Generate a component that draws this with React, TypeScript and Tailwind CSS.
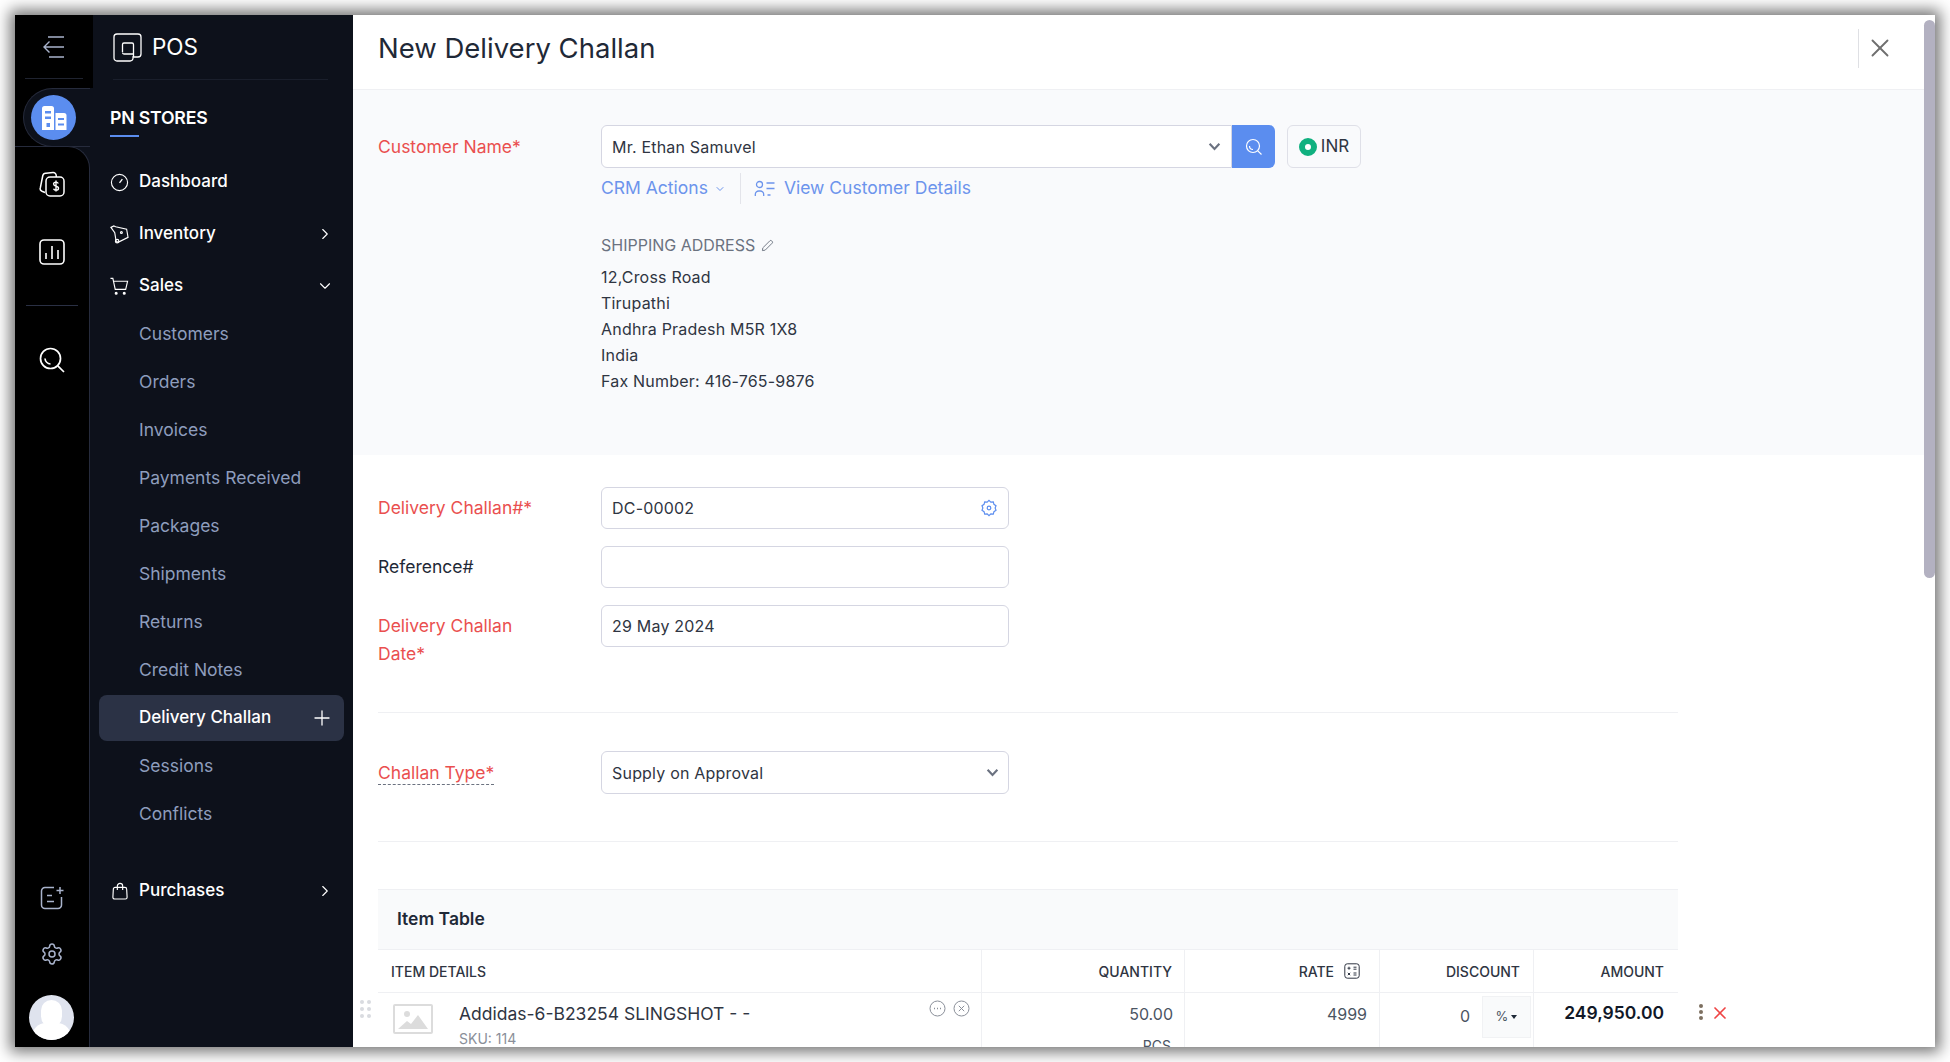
import { ChevronDown, ChevronRight, Plus, Settings, X } from "lucide-react";

const subItems = ["Customers", "Orders", "Invoices", "Payments Received", "Packages", "Shipments", "Returns", "Credit Notes"];
const addressLines = ["12,Cross Road", "Tirupathi", "Andhra Pradesh M5R 1X8", "India", "Fax Number: 416-765-9876"];

function SolidChevron({ className }: { className?: string }) {
  return (
    <svg viewBox="0 0 12 8" className={className} fill="none" stroke="currentColor" strokeWidth="2">
      <path d="M1.5 1.5 6 6.2l4.5-4.7" />
    </svg>
  );
}

function Rail() {
  return (
    <div className="w-[75px] shrink-0 flex flex-col bg-[#0d111b] text-white">
      <div className="relative z-10 w-[78px] h-[73px] bg-black px-[10px] shrink-0">
        <div className="h-[64px] border-b border-[#1f2330] flex items-center justify-center">
          <svg viewBox="0 0 24 24" className="w-[24px] h-[24px] text-[#a9b3cc]" fill="none" stroke="currentColor" strokeWidth="1.4">
            <path d="M6 2h16M2 12h20M7 22h15M7.5 6.5 2 12l5.5 5.5" />
          </svg>
        </div>
      </div>
      <div className="h-[59px] shrink-0 bg-black">
        <div className="h-full ml-[8px] pl-[7px] bg-[#0d111b] rounded-l-[30px] border-l border-t border-b border-[#262b3c] flex items-center">
          <div className="w-[45px] h-[45px] rounded-full bg-[#5b8def] flex items-center justify-center">
            <svg viewBox="0 0 26 26" className="w-[26px] h-[26px] text-white" fill="currentColor">
              <path d="M1 3.5A2.5 2.5 0 0 1 3.500 1h7A2.500 2.500 0 0 1 13 3.500V25H1z" />
              <path d="M14.500 8H23a2.500 2.500 0 0 1 2.500 2.500V25h-11z" />
              <path d="M4 6h6v2.500H4zM4 11.500h6V14H4zM5.500 18h3.500v4H5.500zM17 13h6v2H17zM17 18.500h6v2H17z" fill="#5b8def" />
            </svg>
          </div>
        </div>
      </div>
      <div className="flex-1 bg-black rounded-tr-[22px] border-t border-r border-[#262b3c] flex flex-col items-center pr-[1px] -mt-px">
        <svg viewBox="0 0 26 26" className="mt-[24px] w-[26px] h-[26px]" fill="none" stroke="currentColor" strokeWidth="1.500">
          <path d="M6 21.500 3 20.300A3 3 0 0 1 1.400 16.500L3.800 4.500A3 3 0 0 1 7 2.200L14 1.500a3 3 0 0 1 3.200 2.800L17.300 6" />
          <rect x="7" y="6" width="18" height="19" rx="4" fill="#000" />
          <path d="M19.300 12.500c-.5-1-1.300-1.400-2.300-1.400-1.400 0-2.400.8-2.400 2s1 1.800 2.400 2.100 2.500.9 2.500 2.100-1 2-2.500 2c-1.100 0-2-.5-2.500-1.500M17 9.500v11" strokeWidth="1.400" />
        </svg>
        <svg viewBox="0 0 26 26" className="mt-[42px] w-[26px] h-[26px]" fill="none" stroke="currentColor" strokeWidth="1.600">
          <rect x="1" y="1" width="24" height="24" rx="4" />
          <path d="M7 14v6M13 7v13M19 11v9" />
        </svg>
        <div className="mt-[40px] w-[52px] border-t border-[#2a3044]" />
        <svg viewBox="0 0 26 26" className="mt-[41px] w-[26px] h-[26px]" fill="none" stroke="currentColor" strokeWidth="1.700">
          <circle cx="11.500" cy="11.500" r="10" />
          <path d="M18.800 18.800 25 25M6 11.500a6 6 0 0 0 5.500 5.500" />
        </svg>
        <div className="mt-auto flex flex-col items-center text-[#a9b3cc]">
          <svg viewBox="0 0 24 24" className="w-[24px] h-[24px] ml-[1px]" fill="none" stroke="currentColor" strokeWidth="1.500">
            <path d="M14 1.500H5A3.500 3.500 0 0 0 1.500 5v14A3.500 3.500 0 0 0 5 22.500h13a3.500 3.500 0 0 0 3.500-3.500v-8" />
            <path d="M7 9.500h5M7 15.500h7M20 1v7M16.500 4.500h7" />
          </svg>
          <Settings className="mt-[32px] w-[24px] h-[24px]" strokeWidth={1.500} />
          <div className="mt-[29px] mb-[7px] w-[45px] h-[45px] rounded-full bg-[#dfe3ee] overflow-hidden relative">
            <div className="absolute left-[12px] top-[5px] w-[21px] h-[27px] rounded-full bg-white" />
            <div className="absolute left-[3px] top-[28px] w-[39px] h-[24px] rounded-t-[14px] bg-white" />
          </div>
        </div>
      </div>
    </div>
  );
}

function Sidebar() {
  return (
    <aside className="w-[263px] shrink-0 bg-[#0d111b] text-white">
      <div className="h-[65px] ml-[23px] mr-[25px] border-b border-[#1a1f2c] flex items-center gap-[10px]">
        <svg viewBox="0 0 29 29" className="w-[29px] h-[29px]" fill="none" stroke="currentColor" strokeWidth="1.300">
          <path d="M4 1h21a3 3 0 0 1 3 3v17a3 3 0 0 1-3 3h-5v1.500a3 3 0 0 1-3 2.500H4a3 3 0 0 1-3-3V4a3 3 0 0 1 3-3z" />
          <path d="M11 10h8a1.500 1.500 0 0 1 1.500 1.500V24M9.500 19v-7.500A1.500 1.500 0 0 1 11 10M9.500 19.500a1.500 1.500 0 0 0 1.500 1.500h9.500" />
        </svg>
        <span className="text-[22.5px] leading-none">POS</span>
      </div>
      <div className="pl-[20px] pt-[5px] h-[72px] flex items-center relative">
        <span className="text-[17.7px] font-semibold tracking-[-0.2px]">PN STORES</span>
        <div className="absolute left-[20px] top-[55px] w-[29px] h-[2px] bg-[#5b8def]" />
      </div>
      <nav className="flex flex-col mt-[6px]">
        <div className="h-[48px] pl-[20px] flex items-center text-[17px] font-medium">
          <svg viewBox="0 0 20 20" className="w-[19px] h-[19px] mr-[10px]" fill="none" stroke="currentColor" strokeWidth="1.200">
            <circle cx="10" cy="10" r="8.500" />
            <path d="M10 10.500 13 6.500" strokeWidth="1.400" />
          </svg>
          Dashboard
        </div>
        <div className="mt-[4px] h-[48px] pl-[20px] pr-[19px] flex items-center text-[17px] font-medium">
          <svg viewBox="0 0 20 20" className="w-[19px] h-[19px] mr-[10px]" fill="none" stroke="currentColor" strokeWidth="1.200">
            <path d="M1 2.500 4 1l2 .8L17.500 4.500 19 13l-10 5-2.500-.500L5 8z" />
            <circle cx="7.500" cy="17" r="1.800" />
            <circle cx="12" cy="8" r="1" />
          </svg>
          <span className="flex-1">Inventory</span>
          <ChevronRight className="w-[18px] h-[18px]" strokeWidth={1.500} />
        </div>
        <div className="mt-[4px] h-[48px] pl-[20px] pr-[19px] flex items-center text-[17px] font-medium">
          <svg viewBox="0 0 20 20" className="w-[19px] h-[19px] mr-[10px]" fill="none" stroke="currentColor" strokeWidth="1.200">
            <path d="M.5 1.500H3L5.500 13h11L18.500 4.500H3.600" />
            <circle cx="6.500" cy="17" r="1" fill="currentColor" />
            <circle cx="15" cy="17" r="1" fill="currentColor" />
          </svg>
          <span className="flex-1">Sales</span>
          <ChevronDown className="w-[18px] h-[18px]" strokeWidth={1.500} />
        </div>
        {subItems.map((item) => (
          <div key={item} className="h-[48px] pl-[49px] flex items-center text-[17.5px] text-[#8e9dbd]">
            {item}
          </div>
        ))}
        <div className="my-px h-[46px] mx-[9px] pl-[40px] pr-[10px] rounded-[8px] bg-[#2b3245] flex items-center text-[17px] font-medium">
          <span className="flex-1">Delivery Challan</span>
          <Plus className="w-[24px] h-[24px]" strokeWidth={1.300} />
        </div>
        <div className="h-[48px] pl-[49px] flex items-center text-[17.5px] text-[#8e9dbd]">Sessions</div>
        <div className="h-[48px] pl-[49px] flex items-center text-[17.5px] text-[#8e9dbd]">Conflicts</div>
        <div className="mt-[29px] h-[48px] pl-[22px] pr-[19px] flex items-center text-[17px] font-medium">
          <svg viewBox="0 0 18 20" className="w-[16px] h-[18px] mr-[11px]" fill="none" stroke="currentColor" strokeWidth="1.300">
            <path d="M3.500 6h11a2 2 0 0 1 2 2l.5 9a2 2 0 0 1-2 2H3a2 2 0 0 1-2-2l.5-9a2 2 0 0 1 2-2z" />
            <path d="M6 9V4.500a3 3 0 0 1 6 0V9" />
          </svg>
          <span className="flex-1">Purchases</span>
          <ChevronRight className="w-[18px] h-[18px]" strokeWidth={1.500} />
        </div>
      </nav>
    </aside>
  );
}

function FormBox({ value, children }: { value?: string; children?: React.ReactNode }) {
  return (
    <div className="w-[408px] h-[42px] px-[10px] bg-white border border-[#d5d6e2] rounded-[6px] flex items-center justify-between text-[16px] tracking-[0.2px] text-[#2f3542]">
      <span>{value}</span>
      {children}
    </div>
  );
}

function CustomerSection() {
  return (
    <section className="h-[365px] bg-[#f9fafc] pt-[35px] pl-[25px] flex">
      <div className="w-[223px] h-[43px] pt-[2px] flex items-center text-[17.5px] text-[#ea4f4f]">Customer Name*</div>
      <div className="flex flex-col">
        <div className="flex">
          <div className="w-[631px] h-[43px] pl-[10px] pr-[10px] bg-white border border-[#d5d6e2] rounded-l-[6px] flex items-center justify-between text-[16px] tracking-[0.2px] text-[#2f3542]">
            Mr. Ethan Samuvel
            <SolidChevron className="w-[13px] h-[9px] text-[#6b7280]" />
          </div>
          <div className="w-[43px] h-[43px] bg-[#5b8def] rounded-r-[6px] flex items-center justify-center">
            <svg viewBox="0 0 18 18" className="w-[18px] h-[18px] text-white" fill="none" stroke="currentColor" strokeWidth="1.200">
              <circle cx="8" cy="8" r="6.500" />
              <path d="M12.800 12.800 16.500 16.500M4.500 8A3.500 3.500 0 0 0 8 11.500" />
            </svg>
          </div>
          <div className="ml-[12px] w-[74px] h-[43px] border border-[#dfe0e8] rounded-[6px] flex items-center justify-center gap-[4px] text-[17px] text-[#2f3542]">
            <div className="w-[18px] h-[18px] rounded-full border-[6px] border-[#10b07f] bg-white" />
            INR
          </div>
        </div>
        <div className="mt-[5px] h-[31px] flex items-center text-[17.5px] text-[#6c94ec]">
          <span>CRM Actions</span>
          <ChevronDown className="w-[12px] h-[12px] ml-[6px]" strokeWidth={2} />
          <div className="ml-[14px] mr-[13px] h-[31px] border-l border-[#e3e4ea]" />
          <svg viewBox="0 0 20 18" className="w-[21px] h-[18px] mr-[9px]" fill="none" stroke="currentColor" strokeWidth="1.300">
            <circle cx="5" cy="4.500" r="3" />
            <path d="M.8 16v-1.500A3.500 3.500 0 0 1 4.300 11h1.400a3.500 3.500 0 0 1 3.500 3.500V16M12 3h8M12 8.500h8M13 15h3" />
          </svg>
          <span>View Customer Details</span>
        </div>
        <div className="mt-[30px] flex items-center text-[16px] leading-[22px] text-[#6b7280]">
          SHIPPING ADDRESS
          <svg viewBox="0 0 14 14" className="w-[13px] h-[13px] ml-[6px]" fill="none" stroke="currentColor" strokeWidth="1">
            <path d="M1.500 12.500 2 9.500 9.500 2a1.400 1.400 0 0 1 2 0l.5.500a1.400 1.400 0 0 1 0 2L4.500 12z" />
          </svg>
        </div>
        <div className="mt-[8px] flex flex-col text-[16px] tracking-[0.2px] leading-[26px] text-[#2f3542]">
          {addressLines.map((line) => (
            <div key={line}>{line}</div>
          ))}
        </div>
      </div>
    </section>
  );
}

function FormSection() {
  return (
    <section className="pt-[32px] pl-[25px] w-[1325px]">
      <div className="flex items-center">
        <div className="w-[223px] text-[17.5px] text-[#ea4f4f]">Delivery Challan#*</div>
        <FormBox value="DC-00002">
          <svg viewBox="0 0 20 20" className="w-[18px] h-[18px] text-[#5b8def]" fill="none" stroke="currentColor" strokeWidth="1.300">
            <path d="M10 1.500 12 3.400l2.800-.2.700 2.700 2.300 1.600-1 2.500 1 2.500-2.300 1.600-.7 2.700-2.800-.2-2 1.900-2-1.900-2.800.2-.7-2.700-2.300-1.600 1-2.500-1-2.500 2.300-1.600.7-2.700 2.800.2z" />
            <circle cx="10" cy="10" r="2" />
          </svg>
        </FormBox>
      </div>
      <div className="mt-[17px] flex items-center">
        <div className="w-[223px] text-[17.5px] text-[#1f2937]">Reference#</div>
        <FormBox />
      </div>
      <div className="mt-[17px] flex items-start">
        <div className="w-[223px] pt-[7px] text-[17.5px] leading-[28px] text-[#ea4f4f]">
          Delivery Challan
          <br />
          Date*
        </div>
        <FormBox value="29 May 2024" />
      </div>
      <div className="mt-[44px] border-t border-[#eff0f3]" />
      <div className="mt-[38px] flex items-center">
        <div className="w-[223px] pt-[2px] text-[17.5px] text-[#ea4f4f]">
          <span className="border-b border-dashed border-[#6b7280] pb-px">Challan Type*</span>
        </div>
        <div className="w-[408px] h-[43px] pl-[10px] pr-[9px] bg-white border border-[#d5d6e2] rounded-[6px] flex items-center justify-between text-[16px] tracking-[0.2px] text-[#2f3542]">
          Supply on Approval
          <SolidChevron className="w-[13px] h-[9px] text-[#6b7280]" />
        </div>
      </div>
      <div className="mt-[47px] border-t border-[#eff0f3]" />
    </section>
  );
}

function ItemTable() {
  return (
    <section className="relative mt-[47px] ml-[25px] w-[1300px]">
      <div className="h-[61px] pl-[19px] bg-[#f9fafb] border-y border-[#eff0f3] flex items-center text-[17.5px] font-semibold text-[#1f2937]">
        Item Table
      </div>
      <div className="h-[43px] grid grid-cols-[603px_203px_195px_154px_145px] border-b border-[#eff0f3] text-[14px] font-medium text-[#2f3542]">
        <div className="pl-[13px] flex items-center">ITEM DETAILS</div>
        <div className="pr-[12px] flex items-center justify-end border-l border-[#eff0f3]">QUANTITY</div>
        <div className="pr-[19px] flex items-center justify-end gap-[10px] border-l border-[#eff0f3]">
          RATE
          <svg viewBox="0 0 16 16" className="w-[16px] h-[16px]" fill="none" stroke="currentColor" strokeWidth="1">
            <rect x=".8" y=".8" width="14.400" height="14.400" rx="2.500" />
            <path d="M3.500 5.200h3M5 3.700v3M9.500 4.200h3M9.500 6.200h3M3.800 9.800l2.400 2.400M6.200 9.800l-2.400 2.400M9.500 10h3M9.500 12h3" />
          </svg>
        </div>
        <div className="pr-[13px] flex items-center justify-end border-l border-[#eff0f3]">DISCOUNT</div>
        <div className="pr-[14px] flex items-center justify-end border-l border-[#eff0f3]">AMOUNT</div>
      </div>
      <div className="relative h-[60px] grid grid-cols-[603px_203px_195px_154px_145px] text-[16px] text-[#4b5563]">
        <div className="relative pl-[15px] pt-[11px] flex">
          <svg viewBox="0 0 40 30" className="w-[40px] h-[30px] text-[#dcdcdc]">
            <rect x="1" y="1" width="38" height="28" rx="1" fill="none" stroke="currentColor" strokeWidth="2" />
            <circle cx="14" cy="10" r="3" fill="currentColor" />
            <path d="M5 25 14 17l4 3 7-9 10 14z" fill="currentColor" />
          </svg>
          <div className="ml-[26px] -mt-[3px]">
            <div className="text-[17.5px] leading-[26px] text-[#2f3542]">Addidas-6-B23254 SLINGSHOT - -</div>
            <div className="text-[14px] leading-[24px] text-[#8a8f99]">SKU: 114</div>
          </div>
          <div className="absolute right-[11px] top-[7px] flex gap-[7px] text-[#8a8f99]">
            <svg viewBox="0 0 17 17" className="w-[17px] h-[17px]" fill="none" stroke="currentColor" strokeWidth="1">
              <circle cx="8.500" cy="8.500" r="7.500" />
              <path d="M5 8.500h1M8 8.500h1M11 8.500h1" strokeWidth="1.400" />
            </svg>
            <svg viewBox="0 0 17 17" className="w-[17px] h-[17px]" fill="none" stroke="currentColor" strokeWidth="1">
              <circle cx="8.500" cy="8.500" r="7.500" />
              <path d="M5.800 5.800l5.400 5.400M11.200 5.800l-5.400 5.400" />
            </svg>
          </div>
        </div>
        <div className="pr-[11px] pt-[10px] flex flex-col items-end border-l border-[#eff0f3] leading-[22px]">
          <span>50.00</span>
          <span className="mt-[10px] text-[14px] mr-[2px]">PCS</span>
        </div>
        <div className="pr-[12px] pt-[10px] text-right border-l border-[#eff0f3] leading-[22px]">4999</div>
        <div className="flex justify-end pt-[3px] pr-[2px] border-l border-[#eff0f3]">
          <span className="pt-[9px] leading-[22px] mr-[12px]">0</span>
          <div className="w-[49px] h-[42px] bg-[#f9fafb] border border-[#f1f2f4] flex items-center justify-center gap-[3px] text-[13px]">
            %
            <span className="w-0 h-0 border-x-[3.500px] border-x-transparent border-t-[4px] border-t-[#1f2937]" />
          </div>
        </div>
        <div className="pr-[14px] pt-[8px] text-right border-l border-[#eff0f3] text-[17.5px] font-semibold leading-[24px] text-[#111827]">
          249,950.00
        </div>
        {/* drag handle and row actions hang outside the table */}
        <div className="absolute -left-[18px] top-[7px] grid grid-cols-2 gap-x-[3px] gap-y-[3px]">
          {[0, 1, 2, 3, 4, 5].map((i) => (
            <span key={i} className="w-[4px] h-[4px] rounded-full bg-[#d9dbe0]" />
          ))}
        </div>
        <div className="absolute left-[1321px] top-[11px] flex flex-col gap-[2px]">
          <span className="w-[4px] h-[4px] rounded-full bg-[#7d6f60]" />
          <span className="w-[4px] h-[4px] rounded-full bg-[#7d6f60]" />
          <span className="w-[4px] h-[4px] rounded-full bg-[#7d6f60]" />
        </div>
        <X className="absolute left-[1332px] top-[10px] w-[20px] h-[20px] text-[#ef4444]" strokeWidth={2} />
      </div>
    </section>
  );
}

export default function App() {
  return (
    <div className="w-[1950px] h-[1062px] bg-white pt-[15px] pl-[15px] overflow-hidden font-['Inter',sans-serif]">
      <div className="relative w-[1920px] h-[1032px] flex overflow-hidden shadow-[0_0_14px_5px_rgba(0,0,0,0.55)]">
        <Rail />
        <Sidebar />
        <main className="flex-1 bg-white overflow-hidden">
          <header className="h-[75px] pl-[25px] pr-[40px] pb-[6px] border-b border-[#eff0f3] flex items-center">
            <h1 className="flex-1 text-[27.5px] font-normal text-[#1f2937]">New Delivery Challan</h1>
            <div className="h-[39px] -mt-[2px] pl-[6px] border-l border-[#dfe0e4] flex items-center">
              <X className="w-[30px] h-[30px] text-[#6f6f6f]" strokeWidth={1.500} />
            </div>
          </header>
          <CustomerSection />
          <FormSection />
          <ItemTable />
        </main>
        <div className="absolute right-0 top-[5px] w-[11px] h-[558px] rounded-[6px] bg-[#b3b1c1]" />
      </div>
    </div>
  );
}
